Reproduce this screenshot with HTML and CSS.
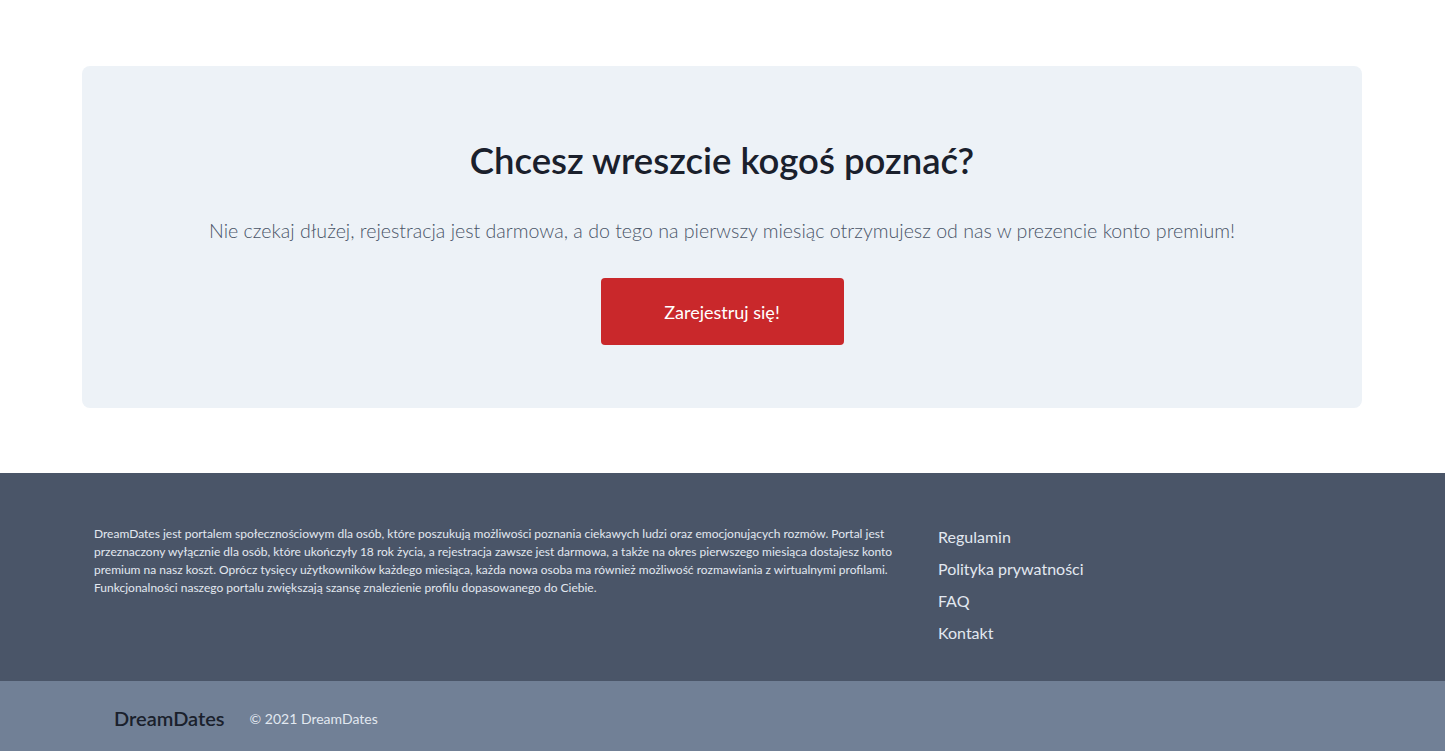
FILE: index.html
```html
<!DOCTYPE html>
<html lang="pl">
<head>
<meta charset="utf-8">
<title>DreamDates</title>
<link rel="stylesheet" href="styles.css">
</head>
<body>
<main class="cta-wrap">
  <section class="cta">
    <h2 class="cta-title">Chcesz wreszcie kogoś poznać?</h2>
    <p class="cta-text">Nie czekaj dłużej, rejestracja jest darmowa, a do tego na pierwszy miesiąc otrzymujesz od nas w prezencie konto premium!</p>
    <a class="cta-btn" href="#">Zarejestruj się!</a>
  </section>
</main>
<footer class="footer">
  <div class="footer-inner">
    <p class="footer-about">DreamDates jest portalem społecznościowym dla osób, które poszukują możliwości poznania ciekawych ludzi oraz emocjonujących rozmów. Portal jest przeznaczony wyłącznie dla osób, które ukończyły 18 rok życia, a rejestracja zawsze jest darmowa, a także na okres pierwszego miesiąca dostajesz konto premium na nasz koszt. Oprócz tysięcy użytkowników każdego miesiąca, każda nowa osoba ma również możliwość rozmawiania z wirtualnymi profilami. Funkcjonalności naszego portalu zwiększają szansę znalezienie profilu dopasowanego do Ciebie.</p>
    <ul class="footer-links">
      <li><a href="#">Regulamin</a></li>
      <li><a href="#">Polityka prywatności</a></li>
      <li><a href="#">FAQ</a></li>
      <li><a href="#">Kontakt</a></li>
    </ul>
  </div>
</footer>
<div class="bottom-bar">
  <div class="bottom-inner">
    <span class="brand">DreamDates</span>
    <span class="copy">© 2021 DreamDates</span>
  </div>
</div>
</body>
</html>
```
FILE: styles.css
```css
* { box-sizing: border-box; }
html, body { margin: 0; padding: 0; }
body {
  font-family: "Lato", "Open Sans", sans-serif;
  background: #ffffff;
  color: #1a202c;
}
.cta-wrap {
  padding: 66px 83px 65px 82px;
}
.cta {
  background: #edf2f7;
  border-radius: 8px;
  height: 342px;
  display: flex;
  flex-direction: column;
  align-items: center;
  padding-top: 68px;
}
.cta-title {
  margin: 0;
  font-size: 36.5px;
  font-weight: 600;
  line-height: 52px;
  color: #1a202c;
}
.cta-text {
  margin: 31px 0 0;
  font-size: 19.6px;
  font-weight: 300;
  line-height: 28px;
  color: #4a5568;
}
.cta-btn {
  margin-top: 33px;
  width: 243px;
  height: 67px;
  display: flex;
  align-items: center;
  justify-content: center;
  background: #c9282b;
  color: #ffffff;
  border-radius: 4px;
  font-size: 18px;
  text-decoration: none;
}
.footer {
  background: #4a5568;
  height: 208px;
}
.footer-inner {
  display: flex;
  padding: 52px 0 0 94px;
}
.footer-about {
  margin: 0;
  width: 812px;
  font-size: 12px;
  line-height: 18px;
  color: #e2e8f0;
}
.footer-links {
  list-style: none;
  margin: 0 0 0 32px;
  padding: 0;
  display: flex;
  flex-direction: column;
  gap: 8px;
}
.footer-links a {
  display: block;
  font-size: 16px;
  line-height: 24px;
  color: #e2e8f0;
  text-decoration: none;
}
.bottom-bar {
  background: #718096;
  height: 70px;
}
.bottom-inner {
  display: flex;
  align-items: center;
  height: 100%;
  padding: 4px 0 0 114px;
  gap: 25px;
}
.brand {
  font-size: 20px;
  font-weight: 600;
  color: #1a202c;
}
.copy {
  font-size: 14px;
  color: #e2e8f0;
}
```
